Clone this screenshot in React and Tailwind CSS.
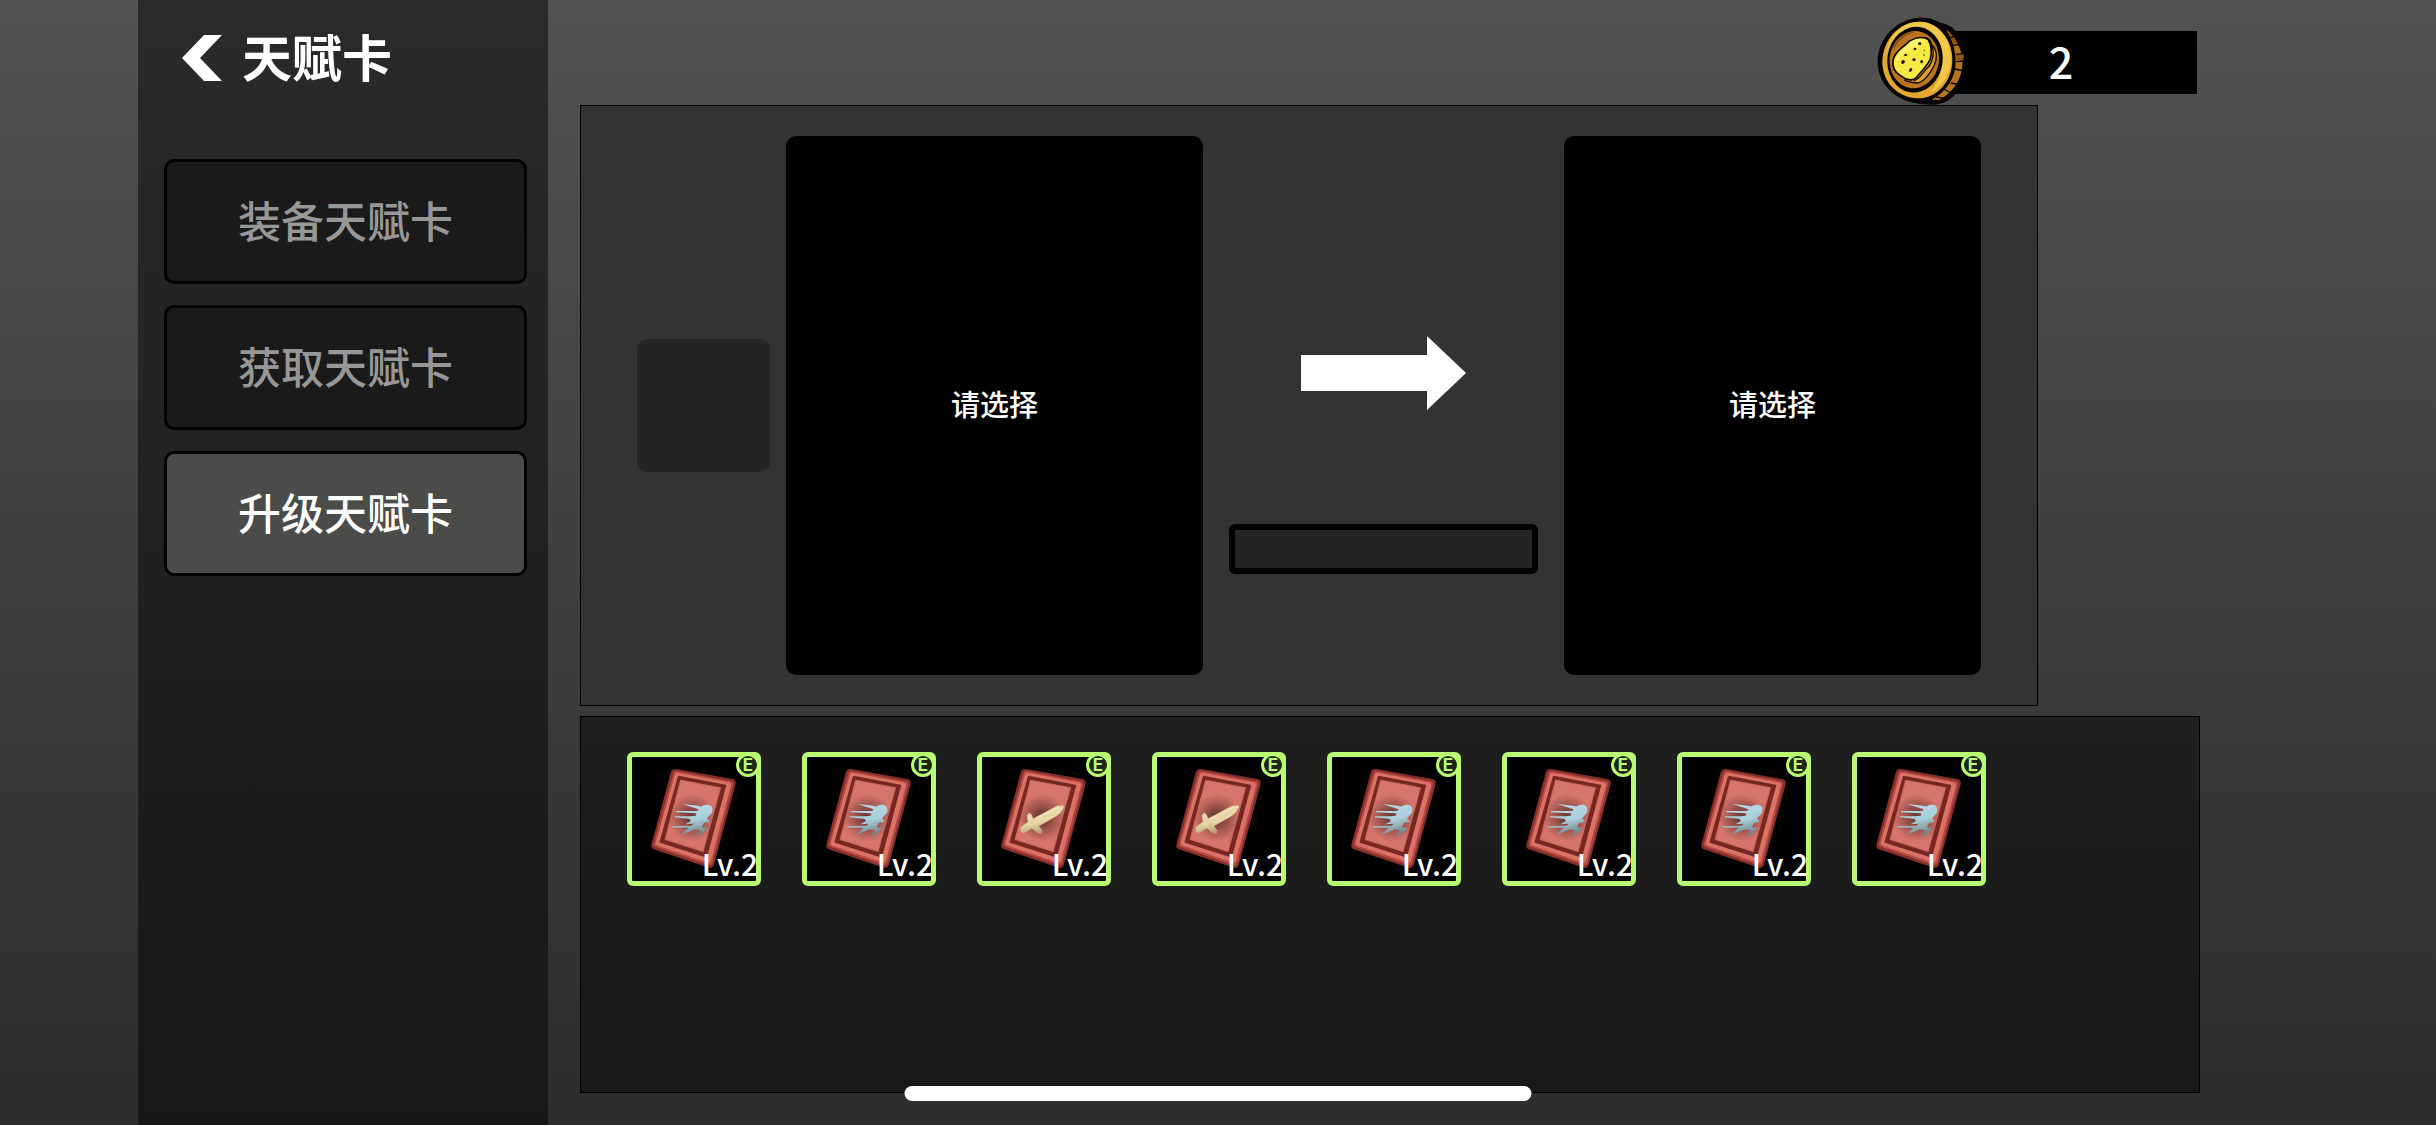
import React from "react";

const navItems = [
  { label: "装备天赋卡", active: false },
  { label: "获取天赋卡", active: false },
  { label: "升级天赋卡", active: true },
];

const cards = ["run", "run", "sword", "sword", "run", "run", "run", "run"];

function CoinIcon() {
  return (
    <svg viewBox="108 52 264 264" className="h-[88px] w-[88px]" aria-hidden="true">
      <path d="M236 54C262 52 284 62 300 70C322 74 336 84 346 96C362 114 371 146 371 186C370 224 364 254 348 278C330 302 304 315 276 315C252 316 226 312 210 308C152 292 110 244 110 186C110 116 166 58 236 54Z" fill="#060300" />
      <path d="M316 90C352 124 366 158 364 194C362 240 338 276 296 300L272 300C318 276 344 232 344 188C344 150 334 120 316 90Z" fill="#b8741d" />
      <path d="M316 90C330 100 344 116 350 132L338 136C332 118 326 104 316 90ZM346 166L368 164L368 180L346 182Z" fill="#8f5514" />
      <g stroke="#0a0500" strokeWidth="4" fill="none">
        <path d="M328 114L344 108M336 138L358 134M344 164L368 162M346 186L370 184M342 208L368 214M330 250L358 256M308 268L338 284M284 292L312 296" />
      </g>
      <path d="M236 66C290 66 334 118 334 180C334 246 288 296 230 296C170 296 124 246 124 188C124 120 174 66 236 66Z" fill="#e3a62f" />
      <path d="M236 66C290 66 330 118 330 176C330 224 302 264 266 282C292 252 304 218 304 182C304 126 272 84 226 82C180 84 144 122 134 172C140 110 180 66 236 66Z" fill="#f2c84b" />
      <ellipse cx="222" cy="180" rx="83" ry="99" transform="rotate(8 222 180)" fill="#080400" />
      <ellipse cx="220" cy="180" rx="74" ry="86" transform="rotate(8 220 180)" fill="#b97422" />
      <path d="M156 158C168 124 194 104 222 98C200 94 174 108 160 132Z" fill="#8e5518" />
      <path d="M246 114C262 112 270 124 272 136C288 148 290 176 280 196C266 224 248 248 228 250C212 248 200 246 192 242Z" fill="#e0a02c" stroke="#0a0500" strokeWidth="4" />
      <path d="M270 134C284 156 274 192 258 206C242 222 238 236 218 244" fill="none" stroke="#0a0500" strokeWidth="4" />
      <path d="M210 122C226 112 250 110 262 120C270 132 274 158 268 178C260 198 236 220 226 234C214 246 194 240 178 228C162 218 154 202 156 184C158 162 178 148 190 138C198 132 202 126 210 122Z" fill="#f6e944" stroke="#0a0500" strokeWidth="5" strokeLinejoin="round" />
      <path d="M206 128C220 118 240 116 252 122C236 134 214 148 196 156C182 166 170 178 164 192C160 168 184 150 196 140Z" fill="#fff36a" />
      <g fill="#1a1200">
        <ellipse cx="236" cy="132" rx="5" ry="4" />
        <ellipse cx="222" cy="148" rx="4" ry="4" />
        <ellipse cx="194" cy="166" rx="5" ry="3" />
        <ellipse cx="186" cy="187" rx="6" ry="5" transform="rotate(-40 186 187)" />
        <ellipse cx="219" cy="180" rx="5" ry="4" />
        <ellipse cx="242" cy="186" rx="4" ry="5" />
        <ellipse cx="209" cy="211" rx="4" ry="6" transform="rotate(35 209 211)" />
        <circle cx="250" cy="152" r="2" />
        <circle cx="249" cy="166" r="2" />
      </g>
    </svg>
  );
}

function RunnerMark() {
  return (
    <g transform="translate(60 45)">
      <path
        d="M187 176L228 181L245 184C250 178 265 176 273 182C280 190 277 203 270 209C266 214 262 216 261 221L267 224L268 230L252 232C247 240 246 244 247 247L259 246L258 253C252 262 242 268 229 275C234 266 238 260 241 254L224 252C210 256 198 264 183 269L206 247L157 246L158 243L214 241L222 235L196 237L212 228C214 225 210 222 206 220L165 216L165 213L210 213L226 211C230 209 230 206 226 204L169 201L169 197L232 197L236 192Z"
        fill="url(#runnerFill)"
      />
    </g>
  );
}

function SwordMark() {
  return (
    <g transform="translate(60 45)">
      <path d="M262 182L279 182L280 187L272 200L262 210L206 242L216 256L214 264L204 263L186 248L162 262L154 259L153 246L175 230L172 210L178 203L184 208L189 221Z" fill="url(#swordFill)" stroke="url(#swordFill)" strokeWidth="2" strokeLinejoin="round" />
      <path d="M196 221L264 187" stroke="#f8ebc2" strokeOpacity="0.7" strokeWidth="4" strokeLinecap="round" />
    </g>
  );
}

function CardArt({ kind }) {
  return (
    <svg viewBox="97 81 370 370" className="h-full w-full" aria-hidden="true">
      <defs>
        <radialGradient id="cardGlow" gradientUnits="userSpaceOnUse" cx="276" cy="262" r="84">
          <stop offset="0" stopColor="#5f2f2c" />
          <stop offset="0.4" stopColor="#99514a" />
          <stop offset="0.85" stopColor="#d6756b" />
        </radialGradient>
        <linearGradient id="runnerFill" x1="0" y1="0" x2="0.3" y2="1">
          <stop offset="0" stopColor="#b9e0eb" />
          <stop offset="0.6" stopColor="#a9ced9" />
          <stop offset="1" stopColor="#71868d" />
        </linearGradient>
        <linearGradient id="swordFill" x1="0.3" y1="0" x2="0.6" y2="1">
          <stop offset="0" stopColor="#eedfb0" />
          <stop offset="0.6" stopColor="#e6d5a3" />
          <stop offset="1" stopColor="#a8976c" />
        </linearGradient>
      </defs>
      <path d="M412 165L408 210M402 238L382 318M370 352L358 382M350 122L392 134" stroke="#251010" strokeWidth="2" strokeDasharray="9 7" />
      <path d="M229 117L397 147Q409 151 406 164L341 404Q336 415 324 411L162 356Q152 352 155 341L213 126Q217 116 229 117Z" fill="#87302a" />
      <path d="M231 123L392 153Q401 156 398 165L337 398Q333 406 324 403L166 349Q160 346 162 340L220 130Q223 122 231 123Z" fill="#b84a41" />
      <path d="M233 128L386 157Q394 159 392 167L332 391Q329 398 321 395L172 345Q166 342 168 336L225 134Q227 128 233 128Z" fill="#db7267" />
      <path d="M236 139L376 166L319 379L181 335Z" fill="#762720" stroke="#762720" strokeWidth="4" strokeLinejoin="round" />
      <path d="M242 150L361 173L309 363L196 327Z" fill="url(#cardGlow)" stroke="#c8675d" strokeWidth="3" strokeLinejoin="round" />
      {kind === "run" ? <RunnerMark /> : <SwordMark />}
    </svg>
  );
}

function TalentCard({ kind }) {
  return (
    <button
      type="button"
      aria-label={kind === "run" ? "疾跑天赋卡 Lv.2" : "利剑天赋卡 Lv.2"}
      className="relative size-[134px] shrink-0 rounded-md border-[5px] border-[#b9fb72] bg-black"
    >
      <CardArt kind={kind} />
      <span className="absolute -top-1 -right-1 flex size-6 items-center justify-center rounded-full border-[3px] border-[#b9fb72] bg-[#20251b] font-[Inter] text-[17px] leading-none font-bold text-[#b9fb72]">
        E
      </span>
      <span className="absolute -right-0.5 bottom-0.5 text-[30px] leading-8 font-medium text-white">Lv.2</span>
    </button>
  );
}

function CardSlot() {
  return (
    <button type="button" className="h-[539px] w-[417px] shrink-0 rounded-[10px] bg-black pb-1 text-[29px] font-medium text-white">
      请选择
    </button>
  );
}

export default function App() {
  return (
    <div className="relative flex min-h-screen bg-linear-to-b from-[#525252] to-[#2d2d2d] pl-[138px] font-['Noto_Sans_CJK_SC',sans-serif] text-white">
      <aside className="w-[410px] shrink-0 bg-black/48 pr-[21px] pl-[26px]">
        <header className="flex h-[116px] items-center gap-5 pl-[18px]">
          <button type="button" aria-label="返回">
            <svg viewBox="0 0 40 46" className="h-[46px] w-10" aria-hidden="true">
              <path d="M22 0H40L18 23L40 46H22L0 23Z" fill="#fff" />
            </svg>
          </button>
          <h1 className="pb-1.5 text-[50px] leading-none font-bold">天赋卡</h1>
        </header>
        <nav className="mt-[43px] flex flex-col gap-[21px]">
          {navItems.map((item) => (
            <button
              key={item.label}
              type="button"
              aria-current={item.active ? "page" : undefined}
              className={
                item.active
                  ? "h-[125px] rounded-[10px] border-[3px] border-black bg-[#4b4b49] pb-1 text-[43px] font-medium text-white"
                  : "h-[125px] rounded-[10px] border-[3px] border-black bg-[#1a1a1a] pb-1 text-[43px] font-medium text-[#979797]"
              }
            >
              {item.label}
            </button>
          ))}
        </nav>
      </aside>

      <main className="mr-[236px] mb-8 ml-8 flex min-w-0 flex-1 flex-col">
        <div className="flex h-[105px] items-start justify-end pt-[31px] pr-[3px]">
          <div className="relative flex h-[63px] w-[272px] items-center justify-center bg-black pb-1 text-[43px] leading-none font-medium">
            <div className="absolute -top-[14px] -left-12 z-10">
              <CoinIcon />
            </div>
            <span>2</span>
          </div>
        </div>

        <section className="mr-[162px] flex items-center border border-black bg-[#333333] px-[56px] py-[30px]">
          <div className="mr-4 size-[133px] shrink-0 rounded-[10px] bg-[#252525]" />
          <CardSlot />
          <div className="flex h-[539px] flex-1 flex-col items-center gap-[114px] pt-[200px]">
            <svg viewBox="0 0 165 74" className="h-[74px] w-[165px]" aria-hidden="true">
              <path d="M0 19H126V0L165 37L126 74V55H0Z" fill="#fff" />
            </svg>
            <button type="button" disabled aria-label="升级" className="h-[50px] w-[309px] rounded-md border-[6px] border-black bg-[#252525]" />
          </div>
          <CardSlot />
        </section>

        <section className="mt-[10px] flex flex-1 flex-wrap content-start gap-[41px] border border-black bg-black/46 py-[35px] pl-[46px]">
          {cards.map((kind, i) => (
            <TalentCard key={i} kind={kind} />
          ))}
        </section>
      </main>

      <div className="absolute bottom-6 left-1/2 h-[15px] w-[627px] -translate-x-1/2 rounded-full bg-white" />
    </div>
  );
}
